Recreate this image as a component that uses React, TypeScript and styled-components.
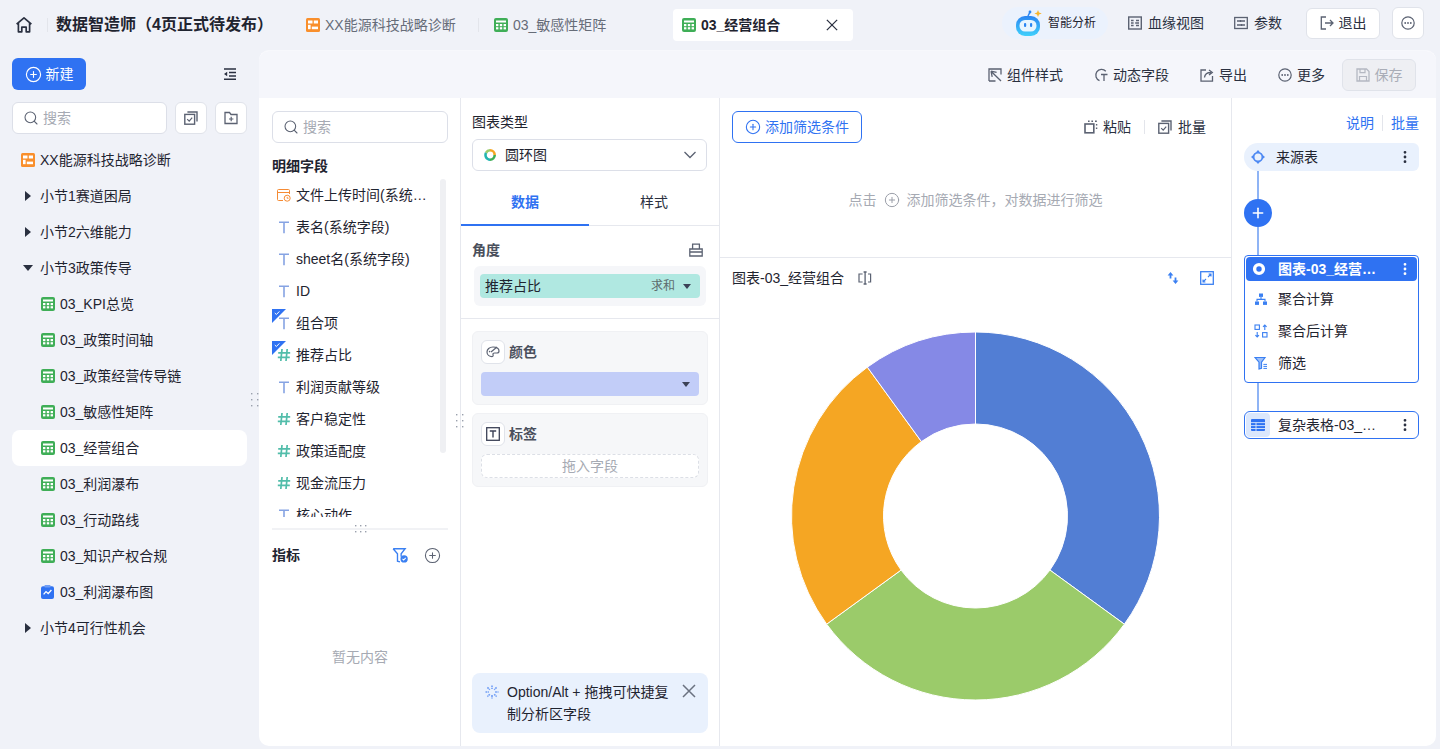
import * as React from 'react'
import styled, { createGlobalStyle } from 'styled-components'
import { CirclePlus, EllipsisVertical, Plus, Search } from 'lucide-react'

const Global = createGlobalStyle`
    html, body {
        margin: 0;
        padding: 0;
        background: #f0f2f8;
        font-family: "Liberation Sans", "Noto Sans CJK SC", sans-serif;
        font-size: 14px;
        line-height: 20px;
        color: #1f2430;
    }
    * { box-sizing: border-box; }
    svg { flex: none; display: block; }
`

const BLUE = '#2f72f2'
const INK = '#5b6272'

/* ---------- icons ---------- */

const Svg = ({ size = 14, children }: { size?: number; children: React.ReactNode }) => (
    <svg width={size} height={size} viewBox="0 0 14 14" fill="none">
        {children}
    </svg>
)

const SheetIcon = () => (
    <Svg>
        <rect width="14" height="14" rx="2" fill="#3fae57" />
        <rect x="2" y="2.5" width="10" height="2" fill="#fff" />
        {[2, 5.8, 9.6].map((x) =>
            [6, 9.2].map((y) => <rect key={`${x}-${y}`} x={x} y={y} width="2.4" height="2.2" fill="#fff" />),
        )}
    </Svg>
)

const BoardIcon = () => (
    <Svg>
        <rect width="14" height="14" rx="1.5" fill="#f98f2c" />
        <rect x="2" y="2.5" width="4.5" height="3" fill="#fff" />
        <rect x="7.8" y="2.5" width="4.2" height="3" fill="#fff" />
        <rect x="2" y="6.8" width="2.6" height="4.4" fill="#fff" />
        <rect x="5.8" y="8.6" width="6.2" height="2.6" fill="#fff" />
    </Svg>
)

const ChartDocIcon = () => (
    <Svg>
        <rect y="1.2" width="13" height="12.8" rx="2" fill="#2f72f2" />
        <rect x="3.4" y="0" width="6.2" height="2.4" rx="1" fill="#6f9df5" />
        <path d="M2.6 9.4 5 6.6l2.2 2 3.2-3.6" stroke="#fff" strokeWidth="1.3" />
    </Svg>
)

const CalendarIcon = () => (
    <Svg>
        <path d="M6 12.5H1.5a1 1 0 0 1-1-1v-9a1 1 0 0 1 1-1h10a1 1 0 0 1 1 1V6" stroke="#f58b34" />
        <path d="M.5 4.5h12" stroke="#f58b34" />
        <circle cx="10.2" cy="10.2" r="3" stroke="#f58b34" />
        <path d="M10.2 8.8v1.5h1.3" stroke="#f58b34" strokeWidth=".9" />
    </Svg>
)

const TextTypeIcon = () => (
    <Svg>
        <path d="M2 2.2h10M7 2.2v11" stroke="#86a3e3" strokeWidth="1.6" />
    </Svg>
)

const NumberTypeIcon = () => (
    <Svg>
        <path d="M5 1 3.8 13M10.2 1 9 13M1.2 4.8h12M.8 9.4h12" stroke="#52bdaa" strokeWidth="1.7" />
    </Svg>
)

const HomeIcon = () => (
    <svg width="18" height="18" viewBox="0 0 18 18" fill="none">
        <path d="M1.6 8.2 9 1.8l7.4 6.4M3.4 6.8v9h3.4v-4.6h4.4v4.6h3.4v-9" stroke="#2a3040" strokeWidth="1.7" strokeLinejoin="round" />
    </svg>
)

const RobotIcon = () => (
    <svg width="28" height="28" viewBox="0 0 28 28" fill="none">
        <defs>
            <linearGradient id="robotFill" x1="0" y1="0" x2="0" y2="1">
                <stop offset="0" stopColor="#2b86f2" />
                <stop offset="1" stopColor="#3fd0fb" />
            </linearGradient>
        </defs>
        <path d="M13 7 15 3" stroke="#2b86f2" strokeWidth="1.6" />
        <circle cx="15" cy="3" r="1.4" fill="#2b86f2" />
        <rect x="1" y="7" width="24" height="20" rx="9" fill="url(#robotFill)" />
        <rect x="4.5" y="11" width="17" height="11.5" rx="5.5" fill="#e8f6ff" />
        <rect x="9" y="14" width="2.2" height="4" rx="1.1" fill="#2b86f2" />
        <rect x="15" y="14" width="2.2" height="4" rx="1.1" fill="#2b86f2" />
        <path d="m23 1 1 2.6 2.8.9-2.8 1-1 2.6-1-2.6-2.6-1 2.6-.9z" fill="#f7b52c" />
    </svg>
)

const LineageIcon = () => (
    <Svg>
        <rect x=".7" y="1" width="12.6" height="12" stroke={INK} strokeWidth="1.4" />
        <path d="M3 4.5h2.6M3 7h2.6M3 9.5h2.6M8 4.5h3M8 9.5h3M7.2 7h3.8" stroke={INK} strokeWidth="1.3" />
    </Svg>
)

const ParamIcon = () => (
    <Svg>
        <rect x=".7" y="1.5" width="12.6" height="11" stroke={INK} strokeWidth="1.3" />
        <path d="M3 5h8M3 9h8" stroke={INK} strokeWidth="1.3" />
        <path d="M6.5 4v2M7.5 8v2" stroke={INK} strokeWidth="1.2" />
    </Svg>
)

const ExitIcon = () => (
    <Svg>
        <path d="M6 1H1.3v12H6" stroke={INK} strokeWidth="1.3" />
        <path d="M5 7h8M10 4l3 3-3 3" stroke={INK} strokeWidth="1.3" />
    </Svg>
)

const StyleIcon = () => (
    <Svg>
        <path d="M1 13V1h12v5.5M7.5 13H1" stroke={INK} strokeWidth="1.3" />
        <path d="M3 3.2 13 13M3 3.2l1.2 5.6M3 3.2l5.6 1.2" stroke={INK} strokeWidth="1.3" />
    </Svg>
)

const DynamicIcon = () => (
    <Svg>
        <path d="M11.8 3.2A5.8 5.8 0 1 0 5.5 12.6" stroke={INK} strokeWidth="1.3" />
        <path d="M7 6.5h6.5M10 6.5V13" stroke={INK} strokeWidth="1.3" />
    </Svg>
)

const ExportIcon = () => (
    <Svg>
        <path d="M6 2H1v11.2h11.5V8" stroke={INK} strokeWidth="1.3" />
        <path d="M4.5 9.5c.3-3.4 2.6-5 6.5-5M9 2l3.3 2.5L9 7" stroke={INK} strokeWidth="1.3" />
    </Svg>
)

const MoreCircleIcon = () => (
    <Svg>
        <circle cx="7" cy="7" r="6.2" stroke={INK} strokeWidth="1.2" />
        <circle cx="4.2" cy="7" r=".9" fill={INK} />
        <circle cx="7" cy="7" r=".9" fill={INK} />
        <circle cx="9.8" cy="7" r=".9" fill={INK} />
    </Svg>
)

const SaveIcon = () => (
    <Svg>
        <path d="M1 1h9.5L13 3.5V13H1z" stroke="#b4b8c2" strokeWidth="1.3" />
        <path d="M4 1v3.6h5V1M3.5 13V8.5h7V13" stroke="#b4b8c2" strokeWidth="1.2" />
    </Svg>
)

const PasteIcon = () => (
    <Svg>
        <rect x="1" y="4" width="8.8" height="8.8" stroke={INK} strokeWidth="1.6" />
        <path d="M4 1.2h1.6M7.4 1.2h1.6M11 1.2h1.8M12.6 4v1.6M12.6 7.4V9" stroke={INK} strokeWidth="1.4" />
    </Svg>
)

const BatchIcon = () => (
    <Svg>
        <rect x=".8" y="3.4" width="9.8" height="9.8" stroke={INK} strokeWidth="1.4" />
        <path d="M3.4 1h9.6v9.6" stroke={INK} strokeWidth="1.4" />
        <path d="m3.2 8.2 2 2 3-3.6" stroke={INK} strokeWidth="1.2" />
    </Svg>
)

const FolderPlusIcon = () => (
    <Svg>
        <path d="M1 1.5h4.5L7 3.5h6V12.5H1z" stroke={INK} strokeWidth="1.3" />
        <path d="M5 8h4.4M7.2 5.8v4.4" stroke={INK} strokeWidth="1.2" />
    </Svg>
)

const CollapseIcon = () => (
    <Svg>
        <path d="M1 2h12M6 5.5h7M6 9h7M1 12.3h12" stroke="#2a3040" strokeWidth="1.5" />
        <path d="M4.2 4.8v4.4L1 7z" fill="#2a3040" />
    </Svg>
)

const BoxIcon = () => (
    <Svg>
        <path d="M3.6 6V1.2h6.8V6M.8 6h12.4v7H.8zM.8 9h12.4" stroke={INK} strokeWidth="1.3" />
    </Svg>
)

const PaletteIcon = () => (
    <Svg>
        <path d="M7 2C3.4 2 1 4.4 1 7c0 2.8 2.4 4.6 5 4.6 1.4 0 1.2-1.2 1-2-.2-1 .4-1.6 1.5-1.6H11c1.3 0 2-.9 2-2C13 3.4 10.4 2 7 2Z" stroke={INK} strokeWidth="1.2" />
        <path d="m5 7 6-5" stroke={INK} strokeWidth="1.2" />
        <circle cx="3.6" cy="6.6" r=".8" fill={INK} />
    </Svg>
)

const TextBoxIcon = () => (
    <Svg>
        <rect x=".7" y=".7" width="12.6" height="12.6" stroke="#3c4257" strokeWidth="1.3" />
        <path d="M3.8 4h6.4M7 4v6.4" stroke="#3c4257" strokeWidth="1.4" />
    </Svg>
)

const SplitTextIcon = () => (
    <Svg>
        <path d="M4.6 3H1v8h3.6M10 3h2.6v8H10" stroke={INK} strokeWidth="1.2" />
        <path d="M5.6 1h3M5.6 13h3M7.1 1v12" stroke={INK} strokeWidth="1.3" />
    </Svg>
)

const SwapIcon = () => (
    <Svg>
        <path d="M4.5 1 1.6 4.6h2v3h1.8v-3h2zM9.5 13l2.9-3.6h-2v-3H8.6v3h-2z" fill="#3b80f2" />
    </Svg>
)

const ExpandIcon = () => (
    <Svg>
        <rect x=".7" y=".7" width="12.6" height="12.6" stroke="#3b80f2" strokeWidth="1.3" />
        <path d="M8 6 11 3M8.6 3H11v2.4M6 8l-3 3M5.4 11H3V8.6" stroke="#3b80f2" strokeWidth="1.1" />
    </Svg>
)

const FunnelCheckIcon = () => (
    <Svg size={16}>
        <path d="M1 1.5h10.5L8 6v2.5M1 1.5 4.8 6v6.5L7 13" stroke="#3b80f2" strokeWidth="1.2" />
        <circle cx="10.6" cy="10.4" r="3.2" fill="#3b80f2" />
        <path d="m9.2 10.4 1 1 1.8-1.9" stroke="#fff" strokeWidth=".9" />
    </Svg>
)

const SourceIcon = () => (
    <Svg>
        <circle cx="7" cy="7" r="4.4" stroke="#4f8af3" strokeWidth="1.8" />
        <path d="M7 0 9.2 2.6H4.8zM7 14l2.2-2.6H4.8zM0 7l2.6-2.2v4.4zM14 7l-2.6-2.2v4.4z" fill="#4f8af3" />
    </Svg>
)

const RingIcon = () => (
    <Svg>
        <circle cx="7" cy="7" r="4.4" stroke="#fff" strokeWidth="3.4" />
    </Svg>
)

const AggIcon = () => (
    <Svg>
        <rect x="5" y="1.5" width="4" height="3.4" fill="#3b80f2" />
        <rect x="1" y="9.5" width="4" height="3.4" fill="#3b80f2" />
        <rect x="9" y="9.5" width="4" height="3.4" fill="#3b80f2" />
        <path d="M7 4.9v2.5M3 9.5V7.4h8v2.1" stroke="#3b80f2" strokeWidth="1.1" />
    </Svg>
)

const AfterAggIcon = () => (
    <Svg>
        <rect x="1" y="1" width="4.4" height="4.4" stroke="#3b80f2" strokeWidth="1.1" />
        <rect x="8.6" y="8.6" width="4.4" height="4.4" stroke="#3b80f2" strokeWidth="1.1" />
        <path d="M10.8 6V1M9 2.8l1.8-1.8 1.8 1.8M3.2 8v5M1.4 11.2l1.8 1.8L5 11.2" stroke="#3b80f2" strokeWidth="1.1" />
    </Svg>
)

const FilterIcon = () => (
    <Svg>
        <path d="M1 1.5h10L7.5 6.2v6L5 13V6.2z" stroke="#3b80f2" strokeWidth="1.2" fill="#9dbff8" />
        <path d="M9.4 8.4h3.6M9.4 10.4h3.6M9.4 12.4h3.6" stroke="#3b80f2" strokeWidth="1" />
    </Svg>
)

const TableIcon = () => (
    <Svg>
        <rect y="1" width="14" height="12" rx="1" fill="#2f72f2" />
        <path d="M0 4.6h14M0 7.6h14M0 10.5h14M5 4.6V13" stroke="#d8e6fd" strokeWidth=".9" />
    </Svg>
)

const SparkIcon = () => (
    <Svg>
        <path d="M7 .5v3.4M7 10.1v3.4M.5 7h3.4M10.1 7h3.4M2.4 2.4l2.4 2.4M9.2 9.2l2.4 2.4M11.6 2.4 9.2 4.8M4.8 9.2l-2.4 2.4" stroke="#6f9df5" strokeWidth="1.6" strokeDasharray="1.8 .6" />
    </Svg>
)

const DonutMiniIcon = () => (
    <Svg>
        <path d="M7 1a6 6 0 0 1 6 6h-2.6A3.4 3.4 0 0 0 7 3.6z" fill="#f5a623" />
        <path d="M13 7a6 6 0 0 1-6 6v-2.6A3.4 3.4 0 0 0 10.4 7z" fill="#3fae57" />
        <path d="M7 13A6 6 0 0 1 2 4l2.2 1.4A3.4 3.4 0 0 0 7 10.4z" fill="#22b5b0" />
        <path d="M2 4a6 6 0 0 1 5-3v2.6a3.4 3.4 0 0 0-2.8 1.8z" fill="#9bcb6a" />
    </Svg>
)

const CloseIcon = ({ size, color }: { size: number; color: string }) => (
    <Svg size={size}>
        <path d="m1 1 12 12M13 1 1 13" stroke={color} strokeWidth="1.5" />
    </Svg>
)

const ChevronIcon = () => (
    <Svg>
        <path d="m1.5 4 5.5 5.5L12.5 4" stroke={INK} strokeWidth="1.3" />
    </Svg>
)

const Grip = ({ cols }: { cols: number }) => (
    <svg width={cols === 2 ? 8 : 14} height={cols === 2 ? 14 : 8}>
        {cols === 2
            ? [0, 6, 12].map((y) => [0, 6].map((x) => <rect key={`${x}${y}`} x={x} y={y} width="1.4" height="1.4" fill="#9aa0ac" />))
            : [0, 6].map((y) => [1, 6, 11].map((x) => <rect key={`${x}${y}`} x={x} y={y} width="1.4" height="1.4" fill="#9aa0ac" />))}
    </svg>
)

/* ---------- donut ---------- */

const slices = [
    { value: 35, color: '#527ed4' },
    { value: 30, color: '#9bcb6a' },
    { value: 25, color: '#f5a623' },
    { value: 10, color: '#8589e6' },
]

const polar = (r: number, turn: number) => {
    const a = turn * 2 * Math.PI
    return `${(184 + r * Math.sin(a)).toFixed(2)} ${(184 - r * Math.cos(a)).toFixed(2)}`
}

const Donut = () => {
    let acc = 0
    return (
        <svg width="369" height="368" viewBox="-0.5 0 369 368">
            {slices.map((s) => {
                const from = acc / 100
                acc += s.value
                const to = acc / 100
                const large = s.value > 50 ? 1 : 0
                return (
                    <path
                        key={s.color}
                        d={`M${polar(184, from)}A184 184 0 ${large} 1 ${polar(184, to)}L${polar(92, to)}A92 92 0 ${large} 0 ${polar(92, from)}Z`}
                        fill={s.color}
                        stroke="#fff"
                        strokeWidth="1"
                    />
                )
            })}
        </svg>
    )
}

/* ---------- data ---------- */

type TreeItem = { label: string; kind: 'board' | 'closed' | 'open' | 'sheet' | 'chart'; active?: boolean }

const tree: TreeItem[] = [
    { label: 'XX能源科技战略诊断', kind: 'board' },
    { label: '小节1赛道困局', kind: 'closed' },
    { label: '小节2六维能力', kind: 'closed' },
    { label: '小节3政策传导', kind: 'open' },
    { label: '03_KPI总览', kind: 'sheet' },
    { label: '03_政策时间轴', kind: 'sheet' },
    { label: '03_政策经营传导链', kind: 'sheet' },
    { label: '03_敏感性矩阵', kind: 'sheet' },
    { label: '03_经营组合', kind: 'sheet', active: true },
    { label: '03_利润瀑布', kind: 'sheet' },
    { label: '03_行动路线', kind: 'sheet' },
    { label: '03_知识产权合规', kind: 'sheet' },
    { label: '03_利润瀑布图', kind: 'chart' },
    { label: '小节4可行性机会', kind: 'closed' },
]

type Field = { label: string; type: 'date' | 'text' | 'num'; used?: boolean }

const fields: Field[] = [
    { label: '文件上传时间(系统字段)', type: 'date' },
    { label: '表名(系统字段)', type: 'text' },
    { label: 'sheet名(系统字段)', type: 'text' },
    { label: 'ID', type: 'text' },
    { label: '组合项', type: 'text', used: true },
    { label: '推荐占比', type: 'num', used: true },
    { label: '利润贡献等级', type: 'text' },
    { label: '客户稳定性', type: 'num' },
    { label: '政策适配度', type: 'num' },
    { label: '现金流压力', type: 'num' },
    { label: '核心动作', type: 'text' },
]

/* ---------- layout ---------- */

const Page = styled.div`
    width: 1440px;
    height: 749px;
    display: flex;
    flex-direction: column;
    overflow: hidden;
    background: #f0f2f8;
`

const TopBar = styled.header`
    height: 50px;
    flex: none;
    display: flex;
    align-items: center;
    padding: 0 16px 0 15px;
`

const Divider = styled.span<{ $h?: number; $ml?: number; $mr?: number }>`
    display: block;
    flex: none;
    width: 1px;
    height: ${({ $h }) => $h ?? 14}px;
    margin-left: ${({ $ml }) => $ml ?? 8}px;
    margin-right: ${({ $mr }) => $mr ?? 8}px;
    background: #e3e5eb;
`

const AppTitle = styled.div`
    font-size: 16px;
    font-weight: 700;
    color: #1f2430;
    white-space: nowrap;
    width: 241px;
`

const FileTab = styled.div<{ $active?: boolean; $w: number }>`
    display: flex;
    align-items: center;
    flex: none;
    gap: 5px;
    width: ${({ $w }) => $w}px;
    height: 32px;
    padding-left: 9px;
    border-radius: 4px;
    white-space: nowrap;
    color: ${({ $active }) => ($active ? '#1f2430' : '#666c78')};
    font-weight: ${({ $active }) => ($active ? 700 : 400)};
    background: ${({ $active }) => ($active ? '#fff' : 'transparent')};
`

const TabClose = styled.span`
    margin-left: auto;
    margin-right: 15px;
    display: flex;
`

const TopRight = styled.div`
    margin-left: auto;
    padding-bottom: 4px;
    display: flex;
    align-items: center;
`

const AiPill = styled.div`
    width: 106px;
    height: 32px;
    display: flex;
    align-items: center;
    gap: 5px;
    padding-left: 13px;
    border-radius: 16px;
    background: #ebf2fd;
    font-size: 12px;
    margin-right: 20px;
`

const TextAction = styled.div<{ $gap?: number; $mr?: number }>`
    display: flex;
    align-items: center;
    gap: ${({ $gap }) => $gap ?? 5}px;
    margin-right: ${({ $mr }) => $mr ?? 0}px;
    white-space: nowrap;
    color: #2a3040;
`

const OutlineButton = styled.button<{ $w: number; $h?: number; $mr?: number }>`
    width: ${({ $w }) => $w}px;
    height: ${({ $h }) => $h ?? 32}px;
    margin-right: ${({ $mr }) => $mr ?? 0}px;
    padding: 0;
    display: flex;
    flex: none;
    align-items: center;
    justify-content: center;
    gap: 5px;
    border: 1px solid #e0e3ea;
    border-radius: 6px;
    background: #fff;
    font: inherit;
    color: #2a3040;
`

const Body = styled.div`
    flex: 1;
    min-height: 0;
    display: flex;
    padding: 0 4px 3px 0;
`

const Sidebar = styled.aside`
    width: 259px;
    flex: none;
    padding: 8px 12px 0;
    position: relative;
`

const SideHead = styled.div`
    display: flex;
    align-items: center;
    justify-content: space-between;
    padding-right: 10px;
    margin-bottom: 12px;
`

const PrimaryButton = styled.button`
    width: 74px;
    height: 32px;
    padding: 0;
    display: flex;
    align-items: center;
    justify-content: center;
    gap: 4px;
    border: 0;
    border-radius: 6px;
    background: ${BLUE};
    color: #fff;
    font: inherit;
`

const SideSearchRow = styled.div`
    display: flex;
    gap: 8px;
    margin-bottom: 8px;
`

const SearchBox = styled.div<{ $w: number }>`
    width: ${({ $w }) => $w}px;
    height: 32px;
    flex: none;
    display: flex;
    align-items: center;
    gap: 4px;
    padding-left: 10px;
    border: 1px solid #dcdfe8;
    border-radius: 6px;
    background: #fff;
    color: #a6aab3;
`

const TreeRow = styled.div<{ $active?: boolean; $indent: number }>`
    height: 36px;
    display: flex;
    align-items: center;
    gap: 5px;
    padding-left: ${({ $indent }) => $indent}px;
    border-radius: 8px;
    white-space: nowrap;
    background: ${({ $active }) => ($active ? '#fff' : 'transparent')};
`

const Caret = styled.span<{ $open?: boolean }>`
    width: 0;
    height: 0;
    flex: none;
    margin-right: 4px;
    ${({ $open }) =>
        $open
            ? `margin-left: -2px; margin-right: 2px; border-left: 5px solid transparent; border-right: 5px solid transparent; border-top: 6px solid #2a3040;`
            : `border-top: 5px solid transparent; border-bottom: 5px solid transparent; border-left: 6px solid #2a3040;`}
`

const SideGrip = styled.span`
    position: absolute;
    right: 0;
    top: 343px;
`

const Panel = styled.main`
    flex: 1;
    min-width: 0;
    display: flex;
    flex-direction: column;
    border-radius: 10px;
    overflow: hidden;
    background: #fff;
    border-top: 1px solid #f7f8fc;
`

const Toolbar = styled.div`
    height: 47px;
    flex: none;
    display: flex;
    align-items: center;
    justify-content: flex-end;
    gap: 31px;
    padding-right: 20px;
    background: #f5f6fb;
`

const SaveButton = styled(OutlineButton)`
    background: #eeeff3;
    color: #a9adb7;
    margin-left: -14px;
`

const Columns = styled.div`
    flex: 1;
    min-height: 0;
    display: flex;
`

const FieldCol = styled.section`
    width: 202px;
    flex: none;
    display: flex;
    flex-direction: column;
    padding: 13px 12px 0 13px;
    border-right: 1px solid #e6e8ee;
    position: relative;
`

const SectionTitle = styled.div<{ $mt?: number }>`
    font-weight: 700;
    margin-top: ${({ $mt }) => $mt ?? 0}px;
`

const FieldList = styled.div`
    height: 338px;
    flex: none;
    margin-top: 3px;
    overflow: hidden;
    position: relative;
    padding-right: 10px;
`

const ScrollThumb = styled.span`
    position: absolute;
    right: 2px;
    top: 0;
    width: 6px;
    height: 274px;
    border-radius: 3px;
    background: #eff0f3;
`

const FieldRow = styled.div`
    height: 32px;
    display: flex;
    align-items: center;
    gap: 5px;
    padding-left: 5px;
    position: relative;
`

const FieldName = styled.span`
    width: 132px;
    overflow: hidden;
    white-space: nowrap;
    text-overflow: ellipsis;
`

const UsedFlag = styled.span`
    position: absolute;
    left: 0;
    top: 2px;
    width: 14px;
    height: 14px;
`

const FieldSplit = styled.div`
    height: 2px;
    flex: none;
    margin-top: 11px;
    background: #f1f2f5;
    position: relative;
`

const SplitGrip = styled.span`
    position: absolute;
    left: 82px;
    top: -3px;
`

const MetricHead = styled.div`
    display: flex;
    align-items: center;
    margin-top: 15px;
    height: 20px;
`

const MetricIcons = styled.div`
    margin-left: auto;
    display: flex;
    align-items: center;
    gap: 16px;
    padding-right: 7px;
`

const Empty = styled.div`
    margin-top: 82px;
    text-align: center;
    color: #a6aab3;
`

const ColGrip = styled.span`
    position: absolute;
    right: -4px;
    top: 316px;
`

const ConfigCol = styled.section`
    width: 259px;
    flex: none;
    display: flex;
    flex-direction: column;
    border-right: 1px solid #e6e8ee;
`

const ConfigTop = styled.div`
    padding: 14px 12px 0 11px;
`

const FieldLabel = styled.div`
    margin-bottom: 7px;
`

const Select = styled.div`
    height: 32px;
    display: flex;
    align-items: center;
    gap: 8px;
    padding: 0 9px 0 10px;
    border: 1px solid #dcdfe8;
    border-radius: 6px;
`

const SelectArrow = styled.span`
    margin-left: auto;
    display: flex;
`

const Tabs = styled.div`
    height: 48px;
    margin-top: 7px;
    display: flex;
    border-bottom: 1px solid #e6e8ee;
`

const Tab = styled.div<{ $active?: boolean }>`
    flex: 1;
    display: flex;
    align-items: center;
    justify-content: center;
    margin-bottom: -1px;
    padding-top: 1px;
    color: ${({ $active }) => ($active ? BLUE : '#2a3040')};
    font-weight: ${({ $active }) => ($active ? 700 : 400)};
    border-bottom: 2px solid ${({ $active }) => ($active ? BLUE : 'transparent')};
    &:first-child {
        flex: 0 0 128px;
    }
`

const AngleBlock = styled.div`
    padding: 14px 13px 12px 11px;
    border-bottom: 1px solid #e6e8ee;
`

const AngleHead = styled.div`
    display: flex;
    align-items: center;
    justify-content: space-between;
    height: 20px;
    margin-bottom: 6px;
    padding-right: 3px;
    font-weight: 700;
    color: #4a4f5c;
`

const DropWell = styled.div`
    margin-left: 2px;
    padding: 8px 6px;
    border-radius: 6px;
    background: #f5f6f9;
`

const Chip = styled.div`
    height: 24px;
    display: flex;
    align-items: center;
    padding: 0 9px 0 5px;
    border-radius: 4px;
    background: #b0e8e1;
`

const ChipMeta = styled.span`
    margin-left: auto;
    font-size: 12px;
    color: #5d6b6c;
`

const MiniCaret = styled.span`
    width: 0;
    height: 0;
    margin-left: 8px;
    border-left: 4px solid transparent;
    border-right: 4px solid transparent;
    border-top: 5px solid #3c4257;
`

const MarkList = styled.div`
    padding-top: 12px;
`

const MarkCard = styled.div`
    margin: 0 11px 8px;
    padding: 8px;
    background: #f6f7f9;
    border: 1px solid #f0f1f4;
    border-radius: 6px;
`

const MarkHead = styled.div`
    display: flex;
    align-items: center;
    gap: 4px;
    margin-bottom: 8px;
    font-weight: 700;
    color: #4a4f5c;
`

const MarkIconBox = styled.span`
    width: 24px;
    height: 24px;
    display: flex;
    align-items: center;
    justify-content: center;
    border: 1px solid #e0e3ea;
    border-radius: 6px;
    background: #fff;
`

const ColorBar = styled.div`
    height: 24px;
    display: flex;
    align-items: center;
    justify-content: flex-end;
    padding-right: 9px;
    border-radius: 4px;
    background: #c2cdf8;
`

const DropZone = styled.div`
    height: 24px;
    display: flex;
    align-items: center;
    justify-content: center;
    border: 1px dashed #dcdfe6;
    border-radius: 6px;
    background: #fff;
    color: #a6aab3;
`

const Tip = styled.div`
    margin: auto 11px 13px;
    padding: 8px 12px 8px 13px;
    height: 60px;
    display: flex;
    gap: 8px;
    border-radius: 8px;
    background: #e9f1fd;
    line-height: 22px;
`

const TipIcon = styled.span`
    padding-top: 4px;
`

const TipClose = styled.span`
    flex: none;
    margin-left: auto;
    padding-top: 3px;
`

const ChartCol = styled.section`
    width: 512px;
    flex: none;
    display: flex;
    flex-direction: column;
    border-right: 1px solid #e6e8ee;
`

const FilterArea = styled.div`
    height: 160px;
    flex: none;
    padding: 13px 12px 0;
    border-bottom: 1px solid #e6e8ee;
`

const FilterHead = styled.div`
    display: flex;
    align-items: center;
    justify-content: space-between;
`

const GhostButton = styled.button`
    width: 130px;
    height: 32px;
    padding: 0;
    display: flex;
    align-items: center;
    justify-content: center;
    gap: 4px;
    border: 1px solid ${BLUE};
    border-radius: 6px;
    background: #fff;
    color: ${BLUE};
    font: inherit;
`

const FilterTools = styled.div`
    display: flex;
    align-items: center;
    padding-right: 13px;
`

const FilterHint = styled.div`
    margin-top: 47px;
    display: flex;
    align-items: center;
    justify-content: center;
    gap: 7px;
    color: #a6aab3;
`

const ChartHead = styled.div`
    height: 40px;
    flex: none;
    display: flex;
    align-items: center;
    padding: 0 17px 0 12px;
`

const ChartTitleIcon = styled.span`
    margin-left: 14px;
`

const ChartTools = styled.div`
    margin-left: auto;
    display: flex;
    gap: 20px;
`

const ChartBox = styled.div`
    flex: 1;
    min-height: 0;
    display: flex;
    justify-content: center;
    padding-top: 34px;
`

const FlowCol = styled.section`
    flex: 1;
    min-width: 0;
    padding: 15px 17px 0 12px;
`

const FlowLinks = styled.div`
    display: flex;
    justify-content: flex-end;
    align-items: center;
    height: 20px;
    margin-bottom: 10px;
    color: ${BLUE};
`

const SourceNode = styled.div`
    height: 28px;
    display: flex;
    align-items: center;
    gap: 11px;
    padding: 0 6px 0 7px;
    background: #e9f1fd;
    border-radius: 14px 6px 6px 14px;
`

const Connector = styled.div<{ $h: number }>`
    width: 2px;
    height: ${({ $h }) => $h}px;
    margin-left: 13px;
    background: #8fb4f5;
`

const AddNode = styled.div`
    width: 28px;
    height: 28px;
    display: flex;
    align-items: center;
    justify-content: center;
    border-radius: 50%;
    background: ${BLUE};
`

const NodeGroup = styled.div`
    height: 128px;
    padding: 1px;
    border: 1px solid ${BLUE};
    border-radius: 4px;
`

const GroupHead = styled.div`
    height: 24px;
    display: flex;
    align-items: center;
    gap: 12px;
    padding: 0 4px 0 6px;
    border-radius: 4px;
    background: ${BLUE};
    color: #fff;
    font-weight: 700;
`

const NodeName = styled.span`
    flex: 1;
    min-width: 0;
    overflow: hidden;
    white-space: nowrap;
    text-overflow: ellipsis;
`

const StepList = styled.div`
    padding-top: 2px;
`

const StepRow = styled.div`
    height: 32px;
    display: flex;
    align-items: center;
    gap: 10px;
    padding-left: 8px;
`

const TableNode = styled.div`
    height: 28px;
    display: flex;
    align-items: center;
    gap: 8px;
    padding: 0 5px 0 1px;
    border: 1px solid ${BLUE};
    border-radius: 6px;
`

const TableIconBox = styled.span`
    width: 24px;
    height: 24px;
    display: flex;
    align-items: center;
    justify-content: center;
    border-radius: 4px;
    background: #dbe7fc;
`

const fieldIcon = (type: Field['type']) => {
    if (type === 'date') return <CalendarIcon />
    if (type === 'num') return <NumberTypeIcon />
    return <TextTypeIcon />
}

const treeIcon = (item: TreeItem) => {
    switch (item.kind) {
        case 'board':
            return <BoardIcon />
        case 'sheet':
            return <SheetIcon />
        case 'chart':
            return <ChartDocIcon />
        case 'open':
            return <Caret $open />
        default:
            return <Caret />
    }
}

const treeIndent = (kind: TreeItem['kind']) => {
    if (kind === 'sheet' || kind === 'chart') return 29
    if (kind === 'board') return 9
    return 13
}

export default function App() {
    return (
        <Page>
            <Global />
            <TopBar>
                <HomeIcon />
                <Divider $ml={14} $mr={8} />
                <AppTitle>数据智造师（4页正式待发布）</AppTitle>
                <FileTab $w={181}>
                    <BoardIcon />
                    XX能源科技战略诊断
                </FileTab>
                <Divider $ml={0} $mr={6} />
                <FileTab $w={188}>
                    <SheetIcon />
                    03_敏感性矩阵
                </FileTab>
                <FileTab $active $w={180}>
                    <SheetIcon />
                    03_经营组合
                    <TabClose>
                        <CloseIcon size={12} color="#2a3040" />
                    </TabClose>
                </FileTab>
                <TopRight>
                    <AiPill>
                        <RobotIcon />
                        智能分析
                    </AiPill>
                    <TextAction $gap={6} $mr={30}>
                        <LineageIcon />
                        血缘视图
                    </TextAction>
                    <TextAction $gap={6} $mr={24}>
                        <ParamIcon />
                        参数
                    </TextAction>
                    <OutlineButton $w={74} $h={31} $mr={12}>
                        <ExitIcon />
                        退出
                    </OutlineButton>
                    <OutlineButton $w={32}>
                        <MoreCircleIcon />
                    </OutlineButton>
                </TopRight>
            </TopBar>
            <Body>
                <Sidebar>
                    <SideHead>
                        <PrimaryButton>
                            <CirclePlus size={17} strokeWidth={1.6} />
                            新建
                        </PrimaryButton>
                        <CollapseIcon />
                    </SideHead>
                    <SideSearchRow>
                        <SearchBox $w={155}>
                            <Search size={16} color={INK} strokeWidth={1.6} />
                            搜索
                        </SearchBox>
                        <OutlineButton $w={32}>
                            <BatchIcon />
                        </OutlineButton>
                        <OutlineButton $w={32}>
                            <FolderPlusIcon />
                        </OutlineButton>
                    </SideSearchRow>
                    {tree.map((item) => (
                        <TreeRow key={item.label} $active={item.active} $indent={treeIndent(item.kind)}>
                            {treeIcon(item)}
                            {item.label}
                        </TreeRow>
                    ))}
                    <SideGrip>
                        <Grip cols={2} />
                    </SideGrip>
                </Sidebar>
                <Panel>
                    <Toolbar>
                        <TextAction>
                            <StyleIcon />
                            组件样式
                        </TextAction>
                        <TextAction>
                            <DynamicIcon />
                            动态字段
                        </TextAction>
                        <TextAction>
                            <ExportIcon />
                            导出
                        </TextAction>
                        <TextAction>
                            <MoreCircleIcon />
                            更多
                        </TextAction>
                        <SaveButton $w={74}>
                            <SaveIcon />
                            保存
                        </SaveButton>
                    </Toolbar>
                    <Columns>
                        <FieldCol>
                            <SearchBox $w={176}>
                                <Search size={16} color={INK} strokeWidth={1.6} />
                                搜索
                            </SearchBox>
                            <SectionTitle $mt={13}>明细字段</SectionTitle>
                            <FieldList>
                                {fields.map((f) => (
                                    <FieldRow key={f.label}>
                                        {fieldIcon(f.type)}
                                        <FieldName>{f.label}</FieldName>
                                        {f.used && (
                                            <UsedFlag>
                                                <Svg>
                                                    <path d="M0 0h14L0 14z" fill={BLUE} />
                                                    <path d="m2.8 4 1.6 1.5L7.4 2.4" stroke="#fff" strokeWidth="1" />
                                                </Svg>
                                            </UsedFlag>
                                        )}
                                    </FieldRow>
                                ))}
                                <ScrollThumb />
                            </FieldList>
                            <FieldSplit>
                                <SplitGrip>
                                    <Grip cols={3} />
                                </SplitGrip>
                            </FieldSplit>
                            <MetricHead>
                                <SectionTitle>指标</SectionTitle>
                                <MetricIcons>
                                    <FunnelCheckIcon />
                                    <CirclePlus size={17} strokeWidth={1.5} color={INK} />
                                </MetricIcons>
                            </MetricHead>
                            <Empty>暂无内容</Empty>
                            <ColGrip>
                                <Grip cols={2} />
                            </ColGrip>
                        </FieldCol>
                        <ConfigCol>
                            <ConfigTop>
                                <FieldLabel>图表类型</FieldLabel>
                                <Select>
                                    <DonutMiniIcon />
                                    圆环图
                                    <SelectArrow>
                                        <ChevronIcon />
                                    </SelectArrow>
                                </Select>
                            </ConfigTop>
                            <Tabs>
                                <Tab $active>数据</Tab>
                                <Tab>样式</Tab>
                            </Tabs>
                            <AngleBlock>
                                <AngleHead>
                                    角度
                                    <BoxIcon />
                                </AngleHead>
                                <DropWell>
                                    <Chip>
                                        推荐占比
                                        <ChipMeta>求和</ChipMeta>
                                        <MiniCaret />
                                    </Chip>
                                </DropWell>
                            </AngleBlock>
                            <MarkList>
                                <MarkCard>
                                    <MarkHead>
                                        <MarkIconBox>
                                            <PaletteIcon />
                                        </MarkIconBox>
                                        颜色
                                    </MarkHead>
                                    <ColorBar>
                                        <MiniCaret />
                                    </ColorBar>
                                </MarkCard>
                                <MarkCard>
                                    <MarkHead>
                                        <MarkIconBox>
                                            <TextBoxIcon />
                                        </MarkIconBox>
                                        标签
                                    </MarkHead>
                                    <DropZone>拖入字段</DropZone>
                                </MarkCard>
                            </MarkList>
                            <Tip>
                                <TipIcon>
                                    <SparkIcon />
                                </TipIcon>
                                <span>Option/Alt + 拖拽可快捷复制分析区字段</span>
                                <TipClose>
                                    <CloseIcon size={14} color="#6b7280" />
                                </TipClose>
                            </Tip>
                        </ConfigCol>
                        <ChartCol>
                            <FilterArea>
                                <FilterHead>
                                    <GhostButton>
                                        <CirclePlus size={16} strokeWidth={1.6} />
                                        添加筛选条件
                                    </GhostButton>
                                    <FilterTools>
                                        <TextAction>
                                            <PasteIcon />
                                            粘贴
                                        </TextAction>
                                        <Divider $ml={13} $mr={13} />
                                        <TextAction $gap={6}>
                                            <BatchIcon />
                                            批量
                                        </TextAction>
                                    </FilterTools>
                                </FilterHead>
                                <FilterHint>
                                    点击
                                    <CirclePlus size={16} strokeWidth={1.5} color="#9a9ea8" />
                                    添加筛选条件，对数据进行筛选
                                </FilterHint>
                            </FilterArea>
                            <ChartHead>
                                图表-03_经营组合
                                <ChartTitleIcon>
                                    <SplitTextIcon />
                                </ChartTitleIcon>
                                <ChartTools>
                                    <SwapIcon />
                                    <ExpandIcon />
                                </ChartTools>
                            </ChartHead>
                            <ChartBox>
                                <Donut />
                            </ChartBox>
                        </ChartCol>
                        <FlowCol>
                            <FlowLinks>
                                说明
                                <Divider $h={16} />
                                批量
                            </FlowLinks>
                            <SourceNode>
                                <SourceIcon />
                                <NodeName>来源表</NodeName>
                                <EllipsisVertical size={16} color="#2a3040" strokeWidth={2.2} />
                            </SourceNode>
                            <Connector $h={28} />
                            <AddNode>
                                <Plus size={16} color="#fff" strokeWidth={2.4} />
                            </AddNode>
                            <Connector $h={28} />
                            <NodeGroup>
                                <GroupHead>
                                    <RingIcon />
                                    <NodeName>图表-03_经营组合</NodeName>
                                    <EllipsisVertical size={16} color="#fff" strokeWidth={2.2} />
                                </GroupHead>
                                <StepList>
                                    <StepRow>
                                        <AggIcon />
                                        聚合计算
                                    </StepRow>
                                    <StepRow>
                                        <AfterAggIcon />
                                        聚合后计算
                                    </StepRow>
                                    <StepRow>
                                        <FilterIcon />
                                        筛选
                                    </StepRow>
                                </StepList>
                            </NodeGroup>
                            <Connector $h={28} />
                            <TableNode>
                                <TableIconBox>
                                    <TableIcon />
                                </TableIconBox>
                                <NodeName>复杂表格-03_经营组合</NodeName>
                                <EllipsisVertical size={16} color="#2a3040" strokeWidth={2.2} />
                            </TableNode>
                        </FlowCol>
                    </Columns>
                </Panel>
            </Body>
        </Page>
    )
}
